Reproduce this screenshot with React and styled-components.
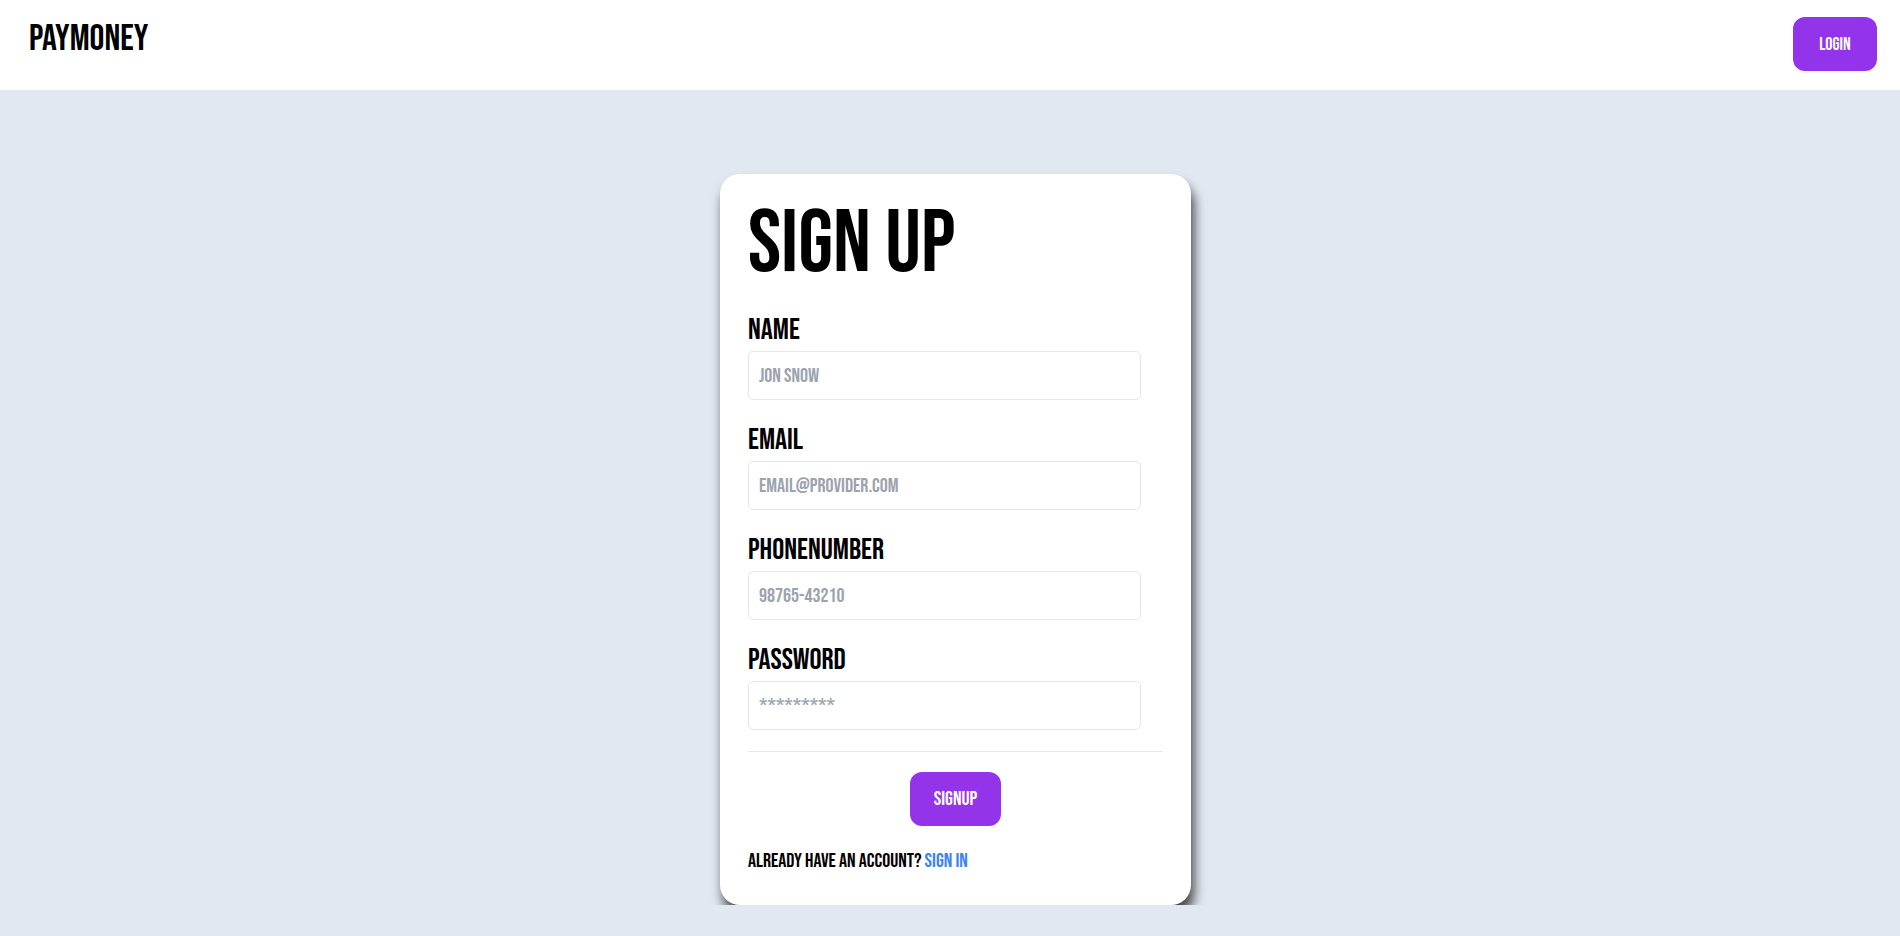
import React from "react";
import styled, { createGlobalStyle } from "styled-components";

const Global = createGlobalStyle`
  body {
    margin: 0;
    background: #e2e8f0;
    font-family: "Bebas Neue", "Liberation Sans Narrow", "DejaVu Sans Condensed", "Liberation Sans", sans-serif;
    font-weight: 400;
    text-transform: uppercase;
  }
`;

const Header = styled.header`
  display: flex;
  justify-content: space-between;
  align-items: flex-start;
  height: 90px;
  box-sizing: border-box;
  padding: 17px 23px 0 29px;
  background: #ffffff;
`;

const Logo = styled.div`
  margin-top: 2px;
  font-size: 37px;
  line-height: 40px;
  color: #000;
`;

const PurpleButton = styled.button`
  background: #9333ea;
  color: #fff;
  border: none;
  border-radius: 12px;
  width: ${(p) => p.w}px;
  height: 54px;
  padding: 0;
  font-family: inherit;
  font-weight: 400;
  font-size: ${(p) => p.fs}px;
  text-transform: uppercase;
  cursor: pointer;
`;

const Main = styled.main`
  display: flex;
  justify-content: center;
  padding: 84px 0 0 11px;
`;

const Card = styled.div`
  width: 471px;
  box-sizing: border-box;
  background: #fff;
  border-radius: 20px;
  padding: 23px 28px 32px;
  box-shadow: 3px 10px 12px rgba(0, 0, 0, 0.7);
`;

const Title = styled.h1`
  margin: 0 0 19px;
  font-size: 89px;
  line-height: 96px;
  font-weight: 400;
  color: #000;
`;

const Field = styled.div`
  display: flex;
  flex-direction: column;
  gap: 3px;
  margin-bottom: 22px;
`;

const Label = styled.label`
  font-size: 30px;
  line-height: 36px;
  color: #000;
`;

const Input = styled.input`
  width: 393px;
  height: 49px;
  box-sizing: border-box;
  border: 1px solid #e5e7eb;
  border-radius: 5px;
  padding: 0 10px;
  font-family: inherit;
  font-size: 20px;
  color: #111;
  outline: none;
  &::placeholder {
    color: #9ca3af;
    text-transform: uppercase;
  }
`;

const Divider = styled.hr`
  border: none;
  border-top: 1px solid #e5e7eb;
  margin: -1px 0 0;
`;

const Center = styled.div`
  display: flex;
  justify-content: center;
  padding: 20px 0 23px;
`;

const Footer = styled.p`
  margin: 0;
  font-size: 20px;
  line-height: 24px;
  color: #000;
`;

const Link = styled.a`
  color: #3b82f6;
  text-decoration: none;
  cursor: pointer;
`;

const fields = [
  { label: "Name", type: "text", placeholder: "Jon Snow" },
  { label: "Email", type: "email", placeholder: "email@provider.com" },
  { label: "PhoneNumber", type: "text", placeholder: "98765-43210" },
  { label: "Password", type: "password", placeholder: "*********" },
];

export default function App() {
  return (
    <>
      <Global />
      <Header>
        <Logo>PayMoney</Logo>
        <PurpleButton w={84} fs={18}>Login</PurpleButton>
      </Header>
      <Main>
        <Card>
          <Title>Sign Up</Title>
          {fields.map((f) => (
            <Field key={f.label}>
              <Label>{f.label}</Label>
              <Input type={f.type} placeholder={f.placeholder} />
            </Field>
          ))}
          <Divider />
          <Center>
            <PurpleButton w={91} fs={20}>Signup</PurpleButton>
          </Center>
          <Footer>
            Already have an account? <Link>Sign in</Link>
          </Footer>
        </Card>
      </Main>
    </>
  );
}
